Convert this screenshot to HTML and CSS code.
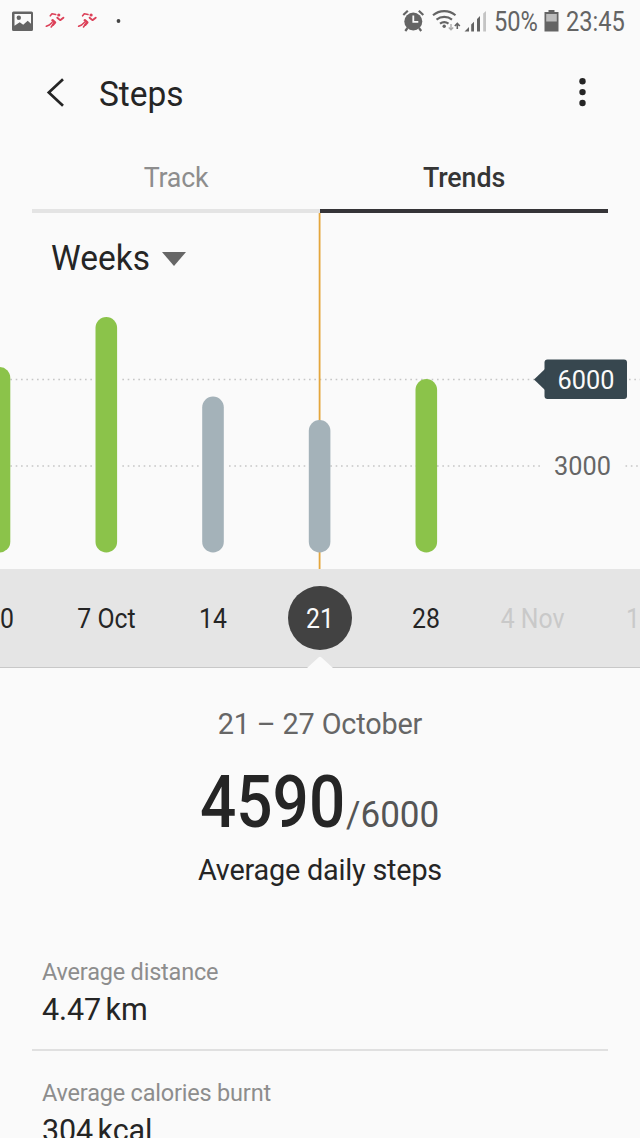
FILE: index.html
```html
<!DOCTYPE html>
<html lang="en">
<head>
<meta charset="utf-8">
<title>Steps</title>
<link rel="stylesheet" href="styles.css">
</head>
<body>
<div class="status_bar">
	<svg class="status_left" width="130" height="44" viewBox="0 0 130 44">
		<path fill="#646464" fill-rule="evenodd" d="M13.500 11.500h18a1.500 1.500 0 0 1 1.500 1.500v16.500a1.500 1.500 0 0 1-1.500 1.500h-18a1.500 1.500 0 0 1-1.500-1.500V13a1.500 1.500 0 0 1 1.500-1.500zM14.500 14v11.800l5.200-3.600 3.500 2.600 4.500-4 3.300 3V14z"/>
		<circle cx="18.800" cy="17.800" r="2.200" fill="#646464"/>
		<g id="runner" fill="none" stroke="#dc4058" stroke-linecap="round" stroke-linejoin="round">
			<circle cx="58.800" cy="15" r="1.600" fill="#dc4058" stroke="none"/>
			<path stroke-width="1.600" d="M50.300 15.800l1.700-2 3.700.7"/>
			<path stroke-width="1.900" d="M57.300 17.700l2.500 2.200M60.500 20l2.900-2.300"/>
			<path stroke-width="2.500" d="M52.500 20.300l2.500 2.200-2 2.300"/>
			<path stroke-width="1.600" d="M52.500 25.300l-1.300 1.700M52 22.500l-2.700 2.500-3 1.200"/>
		</g>
		<use href="#runner" x="32.300"/>
		<circle cx="118.500" cy="21" r="1.900" fill="#444"/>
	</svg>
	<div class="status_right">
		<svg width="105" height="44" viewBox="400 0 105 44">
			<g fill="none" stroke="#646464">
				<circle cx="413.300" cy="21.500" r="9" fill="#646464" stroke="none"/>
				<path stroke-width="2.200" d="M403.300 15l4.500-4.200M423.300 15l-4.500-4.200M407.500 28l-2.200 3M419 28l2.200 3"/>
				<path stroke="#fafafa" stroke-width="1.800" d="M413.300 15.500v6.300h5"/>
				<path stroke-width="2.100" d="M433 15.200a17.500 17.500 0 0 1 22.500 0M436.500 19.600a12.500 12.500 0 0 1 15.500 0M440 23.700a7 7 0 0 1 8.500 0"/>
				<path stroke="#aaa" stroke-width="1.400" d="M451 24v5.500M448.800 27.500l2.200 2.300 2.200-2.300"/>
				<path stroke-width="1.600" d="M457.300 29v-5.500M454.800 26l2.500-2.600 2.500 2.600"/>
			</g>
			<circle cx="444.200" cy="26.300" r="1.700" fill="#646464"/>
			<path fill="#646464" d="M464.500 31.500l4.500-4.500v4.500zM471.200 24.500l2.800-2.800v9.800h-2.800zM477 19l3-3v15.500h-3z"/>
			<path fill="#c4c4c4" d="M483.200 13.500l2.800-2.500v20.500h-2.800z"/>
		</svg>
		<span class="narrow percent">50%</span>
		<svg width="16" height="44" viewBox="544 0 16 44">
			<path fill="#646464" d="M548.500 10h6v2h4v19.500h-14V12h4z"/>
			<path fill="#bdbdbd" d="M546.200 14h10.600v7.500h-10.600z"/>
		</svg>
		<span class="narrow clock">23:45</span>
	</div>
</div>

<div class="header">
	<svg class="back" width="20" height="30" viewBox="0 0 20 30"><path d="M18 1.200L3.800 14.400L18 27.700" fill="none" stroke="#252525" stroke-width="2.700"/></svg>
	<h1>Steps</h1>
	<svg class="more" width="8" height="30" viewBox="0 0 8 30" fill="#252525"><circle cx="3.500" cy="3.300" r="3.200"/><circle cx="3.500" cy="14.100" r="3.200"/><circle cx="3.500" cy="25" r="3.200"/></svg>
</div>

<div class="tabs">
	<div class="tab">Track</div>
	<div class="tab active">Trends</div>
</div>

<div class="chart">
	<div class="period"><span class="period_name">Weeks</span> <span class="arrow"></span></div>
	<svg class="plot" width="640" height="356" viewBox="0 213 640 356">
		<g stroke="#c6c6c6" stroke-width="1.600" stroke-dasharray="1.600 3.733">
			<path d="M-.3 379.500H640"/>
			<path d="M-.3 466H541M625.500 466H640"/>
		</g>
		<path d="M319.600 213V569" stroke="#e4a63c" stroke-width="1.800"/>
		<!-- light gap on both sides of each bar -->
		<g fill="#fafafa">
			<rect x="93" y="376" width="27" height="7"/>
			<rect x="93" y="463" width="27" height="6"/>
			<rect x="200" y="463" width="26" height="6"/>
		</g>
		<g fill="#8bc34a">
			<rect x="-11.300" y="367" width="21.600" height="185.500" rx="10.800"/>
			<rect x="95.500" y="317" width="21.600" height="235.500" rx="10.800"/>
			<rect x="415.500" y="379" width="21.600" height="173.500" rx="10.800"/>
		</g>
		<g fill="#a4b2b9">
			<rect x="202.200" y="396.500" width="21.600" height="156" rx="10.800"/>
			<rect x="308.800" y="420" width="21.600" height="132.500" rx="10.800"/>
		</g>
		<rect x="544.500" y="359.500" width="82.500" height="39.500" rx="3" fill="#37474f"/>
		<path d="M534 379.500l11.500-11v22z" fill="#37474f"/>
		<text x="586" y="388.600" fill="#fafafa">6000</text>
		<text x="582.500" y="474.500" fill="#666">3000</text>
	</svg>
</div>

<div class="dates">
	<div class="date"><span>30</span></div>
	<div class="date"><span>7 Oct</span></div>
	<div class="date"><span>14</span></div>
	<div class="date selected"><span>21</span></div>
	<div class="date"><span>28</span></div>
	<div class="date future"><span>4 Nov</span></div>
	<div class="date future"><span>11</span></div>
	<svg class="notch" width="28" height="14" viewBox="0 0 28 14"><path d="M1 14L12.500 3.500Q14 2 15.500 3.500L27 14z" fill="#fafafa"/></svg>
</div>

<div class="summary">
	<div class="range">21 – 27 October</div>
	<div class="score">
		<span class="steps">4590</span>
		<span class="goal">/6000</span>
	</div>
	<div class="caption">Average daily steps</div>
</div>

<div class="stats">
	<div class="stat">
		<div class="label">Average distance</div>
		<div class="value">4.47 km</div>
	</div>
	<div class="stat">
		<div class="label">Average calories burnt</div>
		<div class="value">304 kcal</div>
	</div>
</div>
</body>
</html>
```
FILE: styles.css
```css
html{
	height: 100%;
	overflow: hidden;
}
body{
	margin: 0;
	height: 1138px;
	overflow: hidden;
	background: #fafafa;
	color: #252525;
	font-family: Roboto, "Liberation Sans", sans-serif;
}
svg{
	display: block;
	flex: none;
}

/* status bar */
.status_bar{
	display: flex;
	justify-content: space-between;
	height: 44px;
	color: #646464;
}
.status_right{
	display: flex;
	width: 240px;
}
.narrow{
	flex: none;
	font-size: 27.500px;
	line-height: 44px;
	white-space: nowrap;
	transform: scaleX(.86);
	transform-origin: 0 0;
}
.percent{
	width: 49px;
	margin-left: -11px;
}
.percent + svg{
	margin-left: 1px;
}
.clock{
	width: 60px;
	margin-left: 6px;
}

/* title */
.header{
	display: flex;
	align-items: center;
	height: 98px;
	padding: 0 53px 0 45px;
}
.header h1{
	flex: 1;
	margin: 2px 0 0 34px;
	font-size: 34.500px;
	font-weight: 400;
	transform: scaleX(.97);
	transform-origin: 0 0;
}

.tabs{
	display: flex;
	height: 71px;
	margin: 0 32px;
}
.tab{
	flex: 1;
	box-sizing: border-box;
	border-bottom: 4px solid #e4e4e4;
	color: #8d8d8d;
	font-size: 26.800px;
	line-height: 73px;
	letter-spacing: -.2px;
	text-align: center;
}
.tab.active{
	border-color: #353437;
	color: #353535;
	font-weight: 500;
	letter-spacing: -.1px;
}

/* chart */
.chart{
	display: grid;
	height: 356px;
}
.period, .plot{
	grid-area: 1 / 1;
}
.period{
	display: flex;
	align-items: center;
	height: 90px;
	padding-left: 51px;
	font-size: 34.500px;
}
.period_name{
	width: 99px;
	transform: scaleX(.97);
	transform-origin: 0 0;
}
.arrow{
	margin: 2px 0 0 12px;
	border: 12px solid transparent;
	border-top: 14px solid #666;
	border-bottom: 0;
}
.plot text{
	font-size: 25.300px;
	text-anchor: middle;
}

.dates{
	position: relative;
	display: grid;
	grid-template-columns: repeat(7, 106.670px);
	justify-content: start;
	height: 99px;
	overflow: hidden;
	background: #e5e5e5;
	box-shadow: inset 0 -1px #c8c8c8;
}
.date{
	display: flex;
	align-items: center;
	justify-content: center;
	height: 98px;
	margin-left: -53.600px;
	margin-right: 53.600px;
	font-size: 28.500px;
}
.date span{
	white-space: nowrap;
	transform: scaleX(.87);
}
.selected::before{
	content: "";
	width: 64px;
	height: 64px;
	border-radius: 50%;
	background: #424242;
}
.selected{
	display: grid;
	justify-items: center;
	justify-content: center;
}
.selected::before, .selected span{
	grid-area: 1 / 1;
}
.selected span{
	color: #fafafa;
}
.future{
	color: #c9c9c9;
}
.notch{
	position: absolute;
	left: 305.500px;
	bottom: 0;
}

/* average of the week */
.summary{
	display: flex;
	flex-direction: column;
	align-items: center;
	height: 268px;
}
.range{
	margin-top: 38px;
	font-size: 28.800px;
	letter-spacing: -.15px;
	line-height: 37px;
	color: #666;
}
.score{
	display: flex;
	align-items: baseline;
	justify-content: center;
	margin-top: 16px;
	height: 86px;
	line-height: 86px;
}
.steps{
	width: 146px;
	font-size: 73px;
	font-weight: 500;
	transform: scaleX(.875);
	transform-origin: 0 0;
}
.goal{
	width: 94px;
	color: #555;
	font-size: 36.500px;
	transform: scaleX(.96);
	transform-origin: 0 0;
}
.caption{
	margin-top: 7px;
	font-size: 28.800px;
	letter-spacing: -.2px;
	line-height: 36px;
}

.stats{
	margin: 0 32px;
}
.stat{
	box-sizing: border-box;
	height: 115px;
	padding: 20px 10px 0;
	border-bottom: 2px solid #e0e0e0;
}
.stat + .stat{
	padding-top: 26px;
}
.label{
	color: #8d8d8d;
	font-size: 23.500px;
	letter-spacing: -.2px;
	line-height: 32px;
}
.value{
	margin-top: 1px;
	font-size: 30.500px;
	line-height: 41px;
	letter-spacing: -.1px;
	word-spacing: -3px;
}
```
